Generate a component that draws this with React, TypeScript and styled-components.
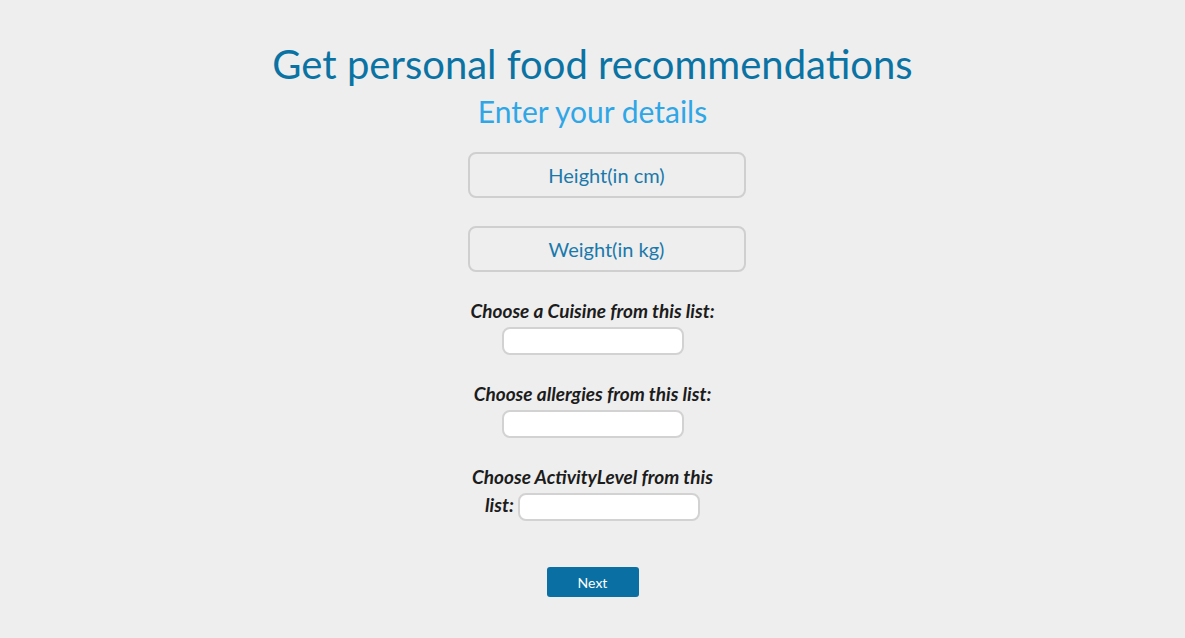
import styled, { createGlobalStyle } from "styled-components";

const GlobalStyle = createGlobalStyle`
  html, body {
    margin: 0;
    padding: 0;
    background-color: #eeeeee;
  }

  body {
    font-family: "Lato", "Open Sans", sans-serif;
  }
`;

const Page = styled.main`
  min-height: 638px;
  display: flex;
  flex-direction: column;
  align-items: center;
  padding-top: 39px;
  box-sizing: border-box;
`;

const Title = styled.h1`
  margin: 0;
  font-size: 40px;
  font-weight: 400;
  line-height: 50px;
  color: #0b73a3;
`;

const Subtitle = styled.h2`
  margin: 0;
  font-size: 30px;
  font-weight: 400;
  line-height: 44px;
  color: #2fa6e6;
`;

const Form = styled.form`
  width: 250px;
  margin-top: 19px;
  text-align: center;
`;

const InputGroup = styled.div`
  display: flex;
  flex-direction: column;
  align-items: flex-start;
  gap: 28px;
  margin-bottom: 25px;
`;

const TextInput = styled.input`
  flex: none;
  width: 278px;
  height: 46px;
  box-sizing: border-box;
  margin: 0;
  border: 2px solid #cfcfcf;
  border-radius: 8px;
  background: transparent;
  font-family: inherit;
  font-size: 20px;
  text-align: center;
  color: #1a79ab;

  &::placeholder {
    color: #1a79ab;
  }
`;

const Field = styled.label`
  display: block;
  width: 250px;
  margin-bottom: 25px;
  text-align: center;
  font-size: 19px;
  font-style: italic;
  font-weight: 700;
  line-height: 28px;
  color: #1c1c1c;
`;

const Select = styled.select`
  width: 182px;
  height: 28px;
  box-sizing: border-box;
  vertical-align: middle;
  margin: 0;
  border: 2px solid #d2d2d2;
  border-radius: 8px;
  background: #fff;
  appearance: none;
`;

const NextButton = styled.button`
  margin-top: 21px;
  width: 92px;
  height: 30px;
  border: none;
  border-radius: 3px;
  background-color: #0a6fa3;
  color: #fff;
  font-family: inherit;
  font-size: 14px;
  cursor: pointer;
`;

export default function App() {
  return (
    <>
      <GlobalStyle />
      <Page>
        <Title>Get personal food recommendations</Title>
        <Subtitle>Enter your details</Subtitle>
        <Form onSubmit={(e) => e.preventDefault()}>
          <InputGroup>
            <TextInput type="text" placeholder="Height(in cm)" />
            <TextInput type="text" placeholder="Weight(in kg)" />
          </InputGroup>
          <Field>
            Choose a Cuisine from this list: <Select />
          </Field>
          <Field>
            Choose allergies from this list: <Select />
          </Field>
          <Field>
            Choose ActivityLevel from this list: <Select />
          </Field>
          <NextButton type="submit">Next</NextButton>
        </Form>
      </Page>
    </>
  );
}
